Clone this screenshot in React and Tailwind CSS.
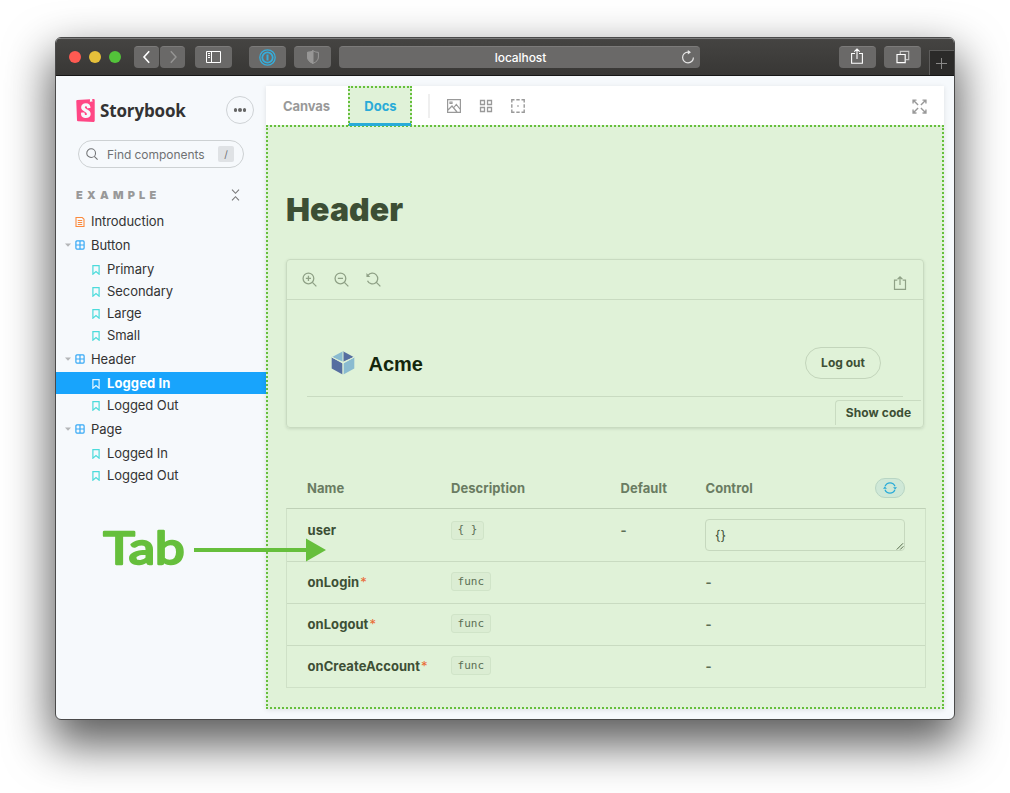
import React from 'react';
import { SiStorybook } from 'react-icons/si';

const tree = [
    { type: 'doc', name: 'Introduction' },
    { type: 'component', name: 'Button' },
    { type: 'story', name: 'Primary' },
    { type: 'story', name: 'Secondary' },
    { type: 'story', name: 'Large' },
    { type: 'story', name: 'Small' },
    { type: 'component', name: 'Header' },
    { type: 'story', name: 'Logged In', selected: true },
    { type: 'story', name: 'Logged Out' },
    { type: 'component', name: 'Page' },
    { type: 'story', name: 'Logged In' },
    { type: 'story', name: 'Logged Out' },
];

const callbacks = ['onLogin', 'onLogout', 'onCreateAccount'];

const Icon = ({ size = 14, className = '', children }) => (
    <svg
        width={size}
        height={size}
        viewBox="0 0 14 14"
        fill="none"
        stroke="currentColor"
        strokeWidth="1"
        className={`shrink-0 ${className}`}
    >
        {children}
    </svg>
);

const ChromeButton = ({ className = '', color = 'text-white', children }) => (
    <div className={`flex h-[22px] items-center justify-center rounded-[4px] border-t border-[#7c7b7a] bg-[#6a6968] ${color} ${className}`}>
        {children}
    </div>
);

const TitleBar = () => (
    <div className="flex h-[38px] shrink-0 items-start border-t border-b border-t-[#7b7b7b] border-b-[#161616] bg-linear-to-b from-[#454442] to-[#383735] pt-[7px]">
        <div className="ml-[13px] flex h-[22px] items-center gap-2">
            <span className="size-3 rounded-full bg-[#fe5a52]" />
            <span className="size-3 rounded-full bg-[#e6c03a]" />
            <span className="size-3 rounded-full bg-[#53c33a]" />
        </div>
        <ChromeButton className="ml-[13px] w-[25px]">
            <Icon className="-mt-px"><path d="M9.2 1.2 4 7l5.2 5.8" strokeWidth="1.6" /></Icon>
        </ChromeButton>
        <ChromeButton className="ml-px w-[25px]" color="text-[#969594]">
            <Icon className="-mt-px"><path d="M4.8 1.2 10 7l-5.2 5.8" strokeWidth="1.4" /></Icon>
        </ChromeButton>
        <ChromeButton className="ml-[10px] w-[37px]">
            <svg width="15" height="12" viewBox="0 0 15 12" fill="none" stroke="currentColor" className="-mt-px">
                <path d="M.5.5h14v11H.5zM5.5.5v11M2 2.5h2M2 4.5h2M2 6.5h2" />
            </svg>
        </ChromeButton>
        <ChromeButton className="ml-[17px] w-[37px]" color="text-[#35addb]">
            <svg width="17" height="17" viewBox="0 0 17 17" fill="none" stroke="currentColor" className="-mt-px">
                <circle cx="8.5" cy="8.5" r="7.7" strokeWidth="1.3" />
                <circle cx="8.5" cy="8.5" r="5.2" strokeWidth="1.8" />
                <path d="M8.5 5.5v6" strokeWidth="2" />
            </svg>
        </ChromeButton>
        <ChromeButton className="ml-2 w-[37px]" color="text-[#989796]">
            <svg width="12" height="14" viewBox="0 0 12 14" fill="none" stroke="currentColor" className="-mt-px">
                <path d="M6 .7C4.4 1.8 2.6 2.3.6 2.3V7c0 3 2 5 5.4 6.4C9.4 12 11.4 10 11.4 7V2.3C9.4 2.3 7.6 1.8 6 .7z" />
                <path d="M6 .7v12.7C2.6 12 .6 10 .6 7V2.3C2.6 2.3 4.4 1.8 6 .7z" fill="currentColor" />
            </svg>
        </ChromeButton>
        <div className="ml-2 flex h-[22px] w-[361px] items-center rounded-[4px] border-t border-[#7c7b7a] bg-[#6a6968] pr-[5px] pl-[21px] text-white">
            <span className="flex-1 text-center text-[12px] font-medium tracking-[-0.08px]">localhost</span>
            <Icon className="-mt-px text-[#e6e6e6]">
                <path d="M12.4 7.4A5.4 5.4 0 1 1 7 2.1h1.6" strokeWidth="1.2" />
                <path d="M6.8 0 10 2.2 6.8 4.5z" fill="currentColor" stroke="none" />
            </Icon>
        </div>
        <ChromeButton className="ml-[139px] w-[37px]">
            <svg width="12" height="16" viewBox="0 0 12 16" fill="none" stroke="currentColor" strokeWidth="1.1" className="-mt-[3px] mr-px">
                <path d="M4 5.5H.6v9.8h10.8V5.5H8M6 11V1M3.3 3.7 6 1l2.7 2.7" />
            </svg>
        </ChromeButton>
        <ChromeButton className="ml-2 w-[37px]">
            <svg width="14" height="14" viewBox="0 0 14 14" fill="none" stroke="currentColor" strokeWidth="1.2" className="-mt-[2px]">
                <path d="M1 4.5h8.2v8.2H1z" />
                <path d="M4.3 4V1.3h8.4v8.4H10" stroke="#c4c4c3" />
            </svg>
        </ChromeButton>
        <div className="mt-[4px] ml-2 flex h-[25px] flex-1 items-center justify-center border-t border-l border-[#5d5c5b] bg-[#2b2a29] pr-px text-[#8a8988]">
            <svg width="11" height="11" viewBox="0 0 11 11" fill="none" stroke="currentColor">
                <path d="M5.5 0v11M0 5.5h11" />
            </svg>
        </div>
    </div>
);

const DocIcon = () => (
    <svg width="10" height="10" viewBox="0 0 10 10" fill="none" stroke="#fb8a3c" className="mt-[2px] shrink-0">
        <path d="M1 .5h6.2L9 2.2v7.3H1z" strokeWidth="1.1" />
        <path d="M2.8 3.5h4.4M2.8 5.5h4.4M2.8 7.5h4.4" />
    </svg>
);

const ComponentIcon = () => (
    <svg width="10" height="10" viewBox="0 0 10 10" fill="none" stroke="#37a9f5" className="shrink-0">
        <rect x=".9" y=".9" width="8.2" height="8.2" rx="1" strokeWidth="1.2" />
        <path d="M5 1v8M1 5h8" strokeWidth="1.2" />
    </svg>
);

const StoryIcon = ({ selected }) => (
    <svg width="10" height="10" viewBox="0 0 10 10" fill="none" stroke={selected ? '#e6f6ff' : '#4bdbdb'} className="mt-[2px] shrink-0">
        <path d="M1.9.6h6.2v8.6L5 6.6 1.9 9.2z" strokeWidth="1.2" />
    </svg>
);

const TreeRow = ({ item }) => {
    if (item.type === 'story') {
        return (
            <li className={`flex h-[22px] items-center gap-[6px] pl-[35px] ${item.selected ? 'bg-[#18a4fc] font-bold text-white' : ''}`}>
                <StoryIcon selected={item.selected} />
                <span className={`pt-[2px] ${item.selected ? 'tracking-[0.1px]' : ''}`}>{item.name}</span>
            </li>
        );
    }
    return (
        <li className={`flex h-[22px] items-center pl-[9px] ${item.type === 'component' ? 'my-[2px]' : ''}`}>
            <svg width="6" height="4" viewBox="0 0 6 4" className="mr-1 shrink-0 fill-[#b4b6b8]">
                {item.type === 'component' && <path d="M0 .5h6L3 3.8z" />}
            </svg>
            {item.type === 'doc' ? <DocIcon /> : <ComponentIcon />}
            <span className="ml-[6px] pt-[2px]">{item.name}</span>
        </li>
    );
};

const Sidebar = () => (
    <aside className="flex w-[210px] shrink-0 flex-col text-[13px] tracking-[-0.06px] text-[#333]">
        <div className="mt-5 flex h-7 items-center pr-3 pl-5">
            <SiStorybook className="-mx-[2px] size-[23px] shrink-0 text-[#ff4785]" />
            <span className="ml-[5px] flex-1 pt-px font-['Open_Sans',sans-serif] text-[17px] font-bold tracking-[-0.15px]">Storybook</span>
            <div className="flex size-7 items-center justify-center gap-px rounded-full border border-[#cfd3d6]">
                <span className="size-[3.5px] rounded-full bg-[#666]" />
                <span className="size-[3.5px] rounded-full bg-[#666]" />
                <span className="size-[3.5px] rounded-full bg-[#666]" />
            </div>
        </div>
        <div className="mt-4 ml-[22px] flex h-7 w-[166px] items-center rounded-full border border-[#cdd1d3] pr-[9px] pl-[7px] text-[#6f7173]">
            <Icon size={12}>
                <circle cx="6" cy="6" r="5.1" strokeWidth="1.2" />
                <path d="m9.7 9.7 3.8 3.8" strokeWidth="1.3" />
            </Icon>
            <span className="ml-[9px] flex-1 pt-px text-[12px] tracking-[-0.05px] whitespace-nowrap">Find components</span>
            <span className="flex h-4 w-4 items-center justify-center rounded-[2px] bg-[#dfe2e5] text-[10px]">/</span>
        </div>
        <div className="mt-[18px] flex h-[18px] items-center justify-between pr-[26px] pl-5">
            <span className="text-[11px] font-black tracking-[4.25px] text-[#999]">EXAMPLE</span>
            <svg width="9" height="12" viewBox="0 0 9 12" fill="none" stroke="#777" strokeWidth="1.1" className="-mt-px">
                <path d="m1 .7 3.5 3.6L8 .7M1 11.3l3.5-3.6L8 11.3" />
            </svg>
        </div>
        <ul className="mt-[6px]">
            {tree.map((item, i) => <TreeRow key={i} item={item} />)}
        </ul>
    </aside>
);

const Toolbar = () => (
    <div className="flex h-[39px] shrink-0 items-start bg-white text-[13px] font-bold text-[#999]">
        <div className="flex h-10 w-[82px] items-center justify-center pt-[2px] pr-px tracking-[-0.1px]">Canvas</div>
        <div className="relative flex h-10 w-16 items-center justify-center border-2 border-b-0 border-dotted border-[#66bf3c] bg-[#e0f2d8] pl-px text-[#29abd8]">
            Docs
            <span className="absolute -inset-x-px bottom-0 h-[3px] bg-[#29abd8]" />
        </div>
        <div className="flex h-10 flex-1 items-center pr-[17px]">
            <span className="ml-4 h-6 w-[2px] bg-[#efefef]" />
            <Icon className="ml-[17px]">
                <path d="M.6.6h12.8v12.8H.6zM1 11l4-4 5 6M6.5 9 9.3 5.5l4 5M3 3h2v1.5H3z" strokeWidth="1.2" />
            </Icon>
            <Icon className="ml-[18px]">
                <path d="M1.5 1.5h4v4h-4zM8.5 1.5h4v4h-4zM1.5 8.5h4v4h-4zM8.5 8.5h4v4h-4z" strokeWidth="1.3" />
            </Icon>
            <Icon className="ml-[18px]">
                <path d="M3.5.8H.8v2.7M10.5.8h2.7v2.7M3.5 13.2H.8v-2.7M10.5 13.2h2.7v-2.7M5.3.8h3.4M5.3 13.2h3.4M.8 5.3v3.4M13.2 5.3v3.4M6.3 7h1.4" strokeWidth="1.4" />
            </Icon>
            <Icon size={15} className="ml-auto">
                <path d="M1 4.2V1h3.2M1 1l4.7 4.7M9.8 1H13v3.2M13 1 8.3 5.7M1 9.8V13h3.2M1 13l4.7-4.7M9.8 13H13V9.8M13 13 8.3 8.3" strokeWidth="1.3" />
            </Icon>
        </div>
    </div>
);

const Preview = () => (
    <div className="mt-[31px] flex h-[169px] flex-col rounded-[4px] border border-[#c9dbc1] shadow-[0_1px_3px_rgba(61,79,53,0.16)]">
        <div className="flex h-10 shrink-0 items-center border-b border-[#c9dbc1] pr-[16px] pl-[15px] text-[#8fa186]">
            <Icon size={15}>
                <circle cx="6" cy="6" r="5" strokeWidth="1.2" />
                <path d="m9.7 9.7 3.7 3.7M3.6 6h4.8M6 3.6v4.8" strokeWidth="1.2" />
            </Icon>
            <Icon size={15} className="ml-[17px]">
                <circle cx="6" cy="6" r="5" strokeWidth="1.2" />
                <path d="m9.7 9.7 3.7 3.7M3.6 6h4.8" strokeWidth="1.2" />
            </Icon>
            <Icon size={15} className="ml-[17px]">
                <path d="M1.9 3.2a5 5 0 1 1-.5 5M9.7 9.7l3.7 3.7" strokeWidth="1.2" />
                <path d="M.4 1v3.6H4z" fill="currentColor" stroke="none" />
            </Icon>
            <Icon size={14} className="mt-[7px] ml-auto">
                <path d="M4.3 4.2H1.5v9.1h11V4.2H9.7M7 9V1M4.6 3.2 7 .9l2.4 2.3" strokeWidth="1.2" />
            </Icon>
        </div>
        <div className="mx-5 flex h-[97px] shrink-0 items-center border-b border-[#c9dbc1] pt-[30px] pr-[22px] pl-6">
            <svg width="24" height="24" viewBox="0 0 24 24" className="shrink-0">
                <path d="M12 .3v10.4L1.2 5.9z" fill="#8abbd0" />
                <path d="M12 .3v10.4l10.6-4.8z" fill="#566ea0" />
                <path d="M.7 6.3 11.6 12.2V23.6L.7 17.6z" fill="#566ea0" />
                <path d="m23.3 6.3-10.9 5.9V23.6l10.9-6z" fill="#8abbd0" />
                <path d="M12 .3v11.3M.8 6.1 12 12.1l11.2-6M12 12v12" fill="none" stroke="#e0f2d8" />
            </svg>
            <span className="ml-[13.5px] flex-1 pt-px font-['Liberation_Sans',sans-serif] text-[20px] font-bold text-[#14260c]">Acme</span>
            <div className="flex h-8 w-[76px] items-center justify-center rounded-full border border-[#c3d5bb] text-[12px] font-bold text-[#3d4f35]">Log out</div>
        </div>
        <div className="mt-[3px] mr-[2px] flex h-[25px] w-[86px] items-center justify-center self-end rounded-tl-[4px] border-t border-l border-[#c9dbc1] text-[12px] font-bold tracking-[0.1px] text-[#3d4f35]">Show code</div>
    </div>
);

const Chip = ({ children }) => (
    <span className="inline-flex h-[19px] items-center rounded-[3px] border border-[#d0e4c8] bg-[#dbedd3] px-[5.5px] font-['DejaVu_Sans_Mono',monospace] text-[11px] font-normal whitespace-pre text-[#5c6e54]">
        {children}
    </span>
);

const columns = 'grid grid-cols-[144px_169px_85px_1fr] pl-5';

const ArgsTable = () => (
    <div className="mt-10 -mr-[2px] text-[13px] font-bold tracking-[0.06px] text-[#3d4f35]">
        <div className="grid h-10 grid-cols-[144px_169px_85px_1fr] items-center pl-[21px] text-[#6a7c62]">
            <span className="pt-px">Name</span>
            <span className="pt-px">Description</span>
            <span className="pt-px pl-[0.5px]">Default</span>
            <div className="flex items-center justify-between pr-[21px]">
                <span className="pt-px pl-[0.5px]">Control</span>
                <span className="flex h-5 w-[30px] items-center justify-center rounded-full border border-[#b8d5c4] bg-[#cfe8d7] text-[#29abd8]">
                    <Icon>
                        <path d="M2.1 5.2a5.3 5.3 0 0 1 9.9 0M11.9 8.8a5.3 5.3 0 0 1-9.9 0" strokeWidth="1.2" />
                        <path d="M10 6.2h4L12.2 8.4zM0 7.8h4L1.8 5.6z" fill="currentColor" stroke="none" />
                    </Icon>
                </span>
            </div>
        </div>
        <div className="border border-t-[#bfd1b7] border-[#cfe1c7]">
            <div className={`${columns} h-[52px] pt-[10px]`}>
                <span className="pl-[0.5px] leading-[22px]">user</span>
                <span><Chip>{'{ }'}</Chip></span>
                <span className="pl-[0.5px] leading-[22px] text-[#5c6e54]">-</span>
                <div className="relative flex h-8 w-[200px] items-center rounded-[4px] border border-[#c6d8be] px-[9px] pt-px font-normal">
                    {'{}'}
                    <svg width="8" height="8" viewBox="0 0 8 8" className="absolute right-0 bottom-0" stroke="#566b4c" strokeWidth="1">
                        <path d="M.8 7.5 7 1.3M4.2 7.5 7.4 4.3" />
                    </svg>
                </div>
            </div>
            {callbacks.map((name) => (
                <div key={name} className={`${columns} h-[42px] items-center border-t border-[#c9dbc1]`}>
                    <span className="pl-[0.5px]">{name}<span className="ml-px font-normal text-[#ea6a35]">*</span></span>
                    <span className="-mt-[3px]"><Chip>func</Chip></span>
                    <span />
                    <span className="pl-[0.5px] text-[#5c6e54]">-</span>
                </div>
            ))}
        </div>
    </div>
);

const App = () => (
    <div className="relative h-[793px] w-[1010px] overflow-hidden bg-white px-[55px] pt-[37px] font-['Inter',sans-serif]">
        <div className="flex h-[683px] w-[900px] flex-col overflow-hidden rounded-[6px] border border-[#4a4a4a] bg-[#f6f9fc] shadow-[0_21px_46px_4px_rgba(0,0,0,0.64)]">
            <TitleBar />
            <div className="flex min-h-0 flex-1">
                <Sidebar />
                <main className="mt-[10px] mr-[10px] mb-[10px] flex flex-1 flex-col shadow-[0_1px_5px_rgba(0,0,0,0.1)]">
                    <Toolbar />
                    <section className="flex-1 border-2 border-dotted border-[#66bf3c] bg-[#e0f2d8] px-[18px] pt-[62px]">
                        <h1 className="h-[39px] text-[32px] leading-[41px] font-black tracking-[0.1px] text-[#3d4f35]">Header</h1>
                        <Preview />
                        <ArgsTable />
                    </section>
                </main>
            </div>
        </div>
        <svg width="230" height="80" viewBox="0 0 230 80" fill="#66bf3c" className="absolute top-[510px] left-[100px]">
            <text
                x="3.5"
                y="54"
                textLength="81"
                lengthAdjust="spacingAndGlyphs"
                stroke="#66bf3c"
                strokeWidth="2.4"
                strokeLinejoin="round"
                className="font-['Lato',sans-serif] text-[44px] font-normal"
            >
                Tab
            </text>
            <path d="M94 38h112v-9.5L226 40l-20 11.5V42H94z" />
        </svg>
    </div>
);

export default App;
